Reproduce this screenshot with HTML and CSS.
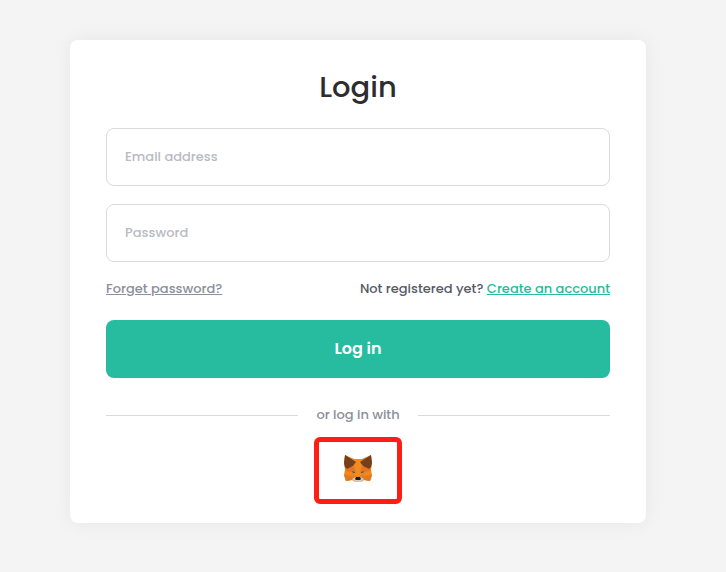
FILE: index.html
```html
<!DOCTYPE html>
<html lang="en">
<head>
<meta charset="utf-8">
<meta name="viewport" content="width=device-width, initial-scale=1">
<title>Login</title>
<link rel="stylesheet" href="styles.css">
</head>
<body>
<main class="card">
  <h1 class="title">Login</h1>
  <form class="form">
    <input class="field" type="email" placeholder="Email address" aria-label="Email address">
    <input class="field" type="password" placeholder="Password" aria-label="Password">
    <div class="links">
      <a class="forgot" href="#">Forget password?</a>
      <span>Not registered yet? <a class="create" href="#">Create an account</a></span>
    </div>
    <button class="submit" type="submit">Log in</button>
  </form>
  <div class="divider">or log in with</div>
  <button class="wallet" type="button" aria-label="MetaMask">
    <svg class="fox" viewBox="0 0 28 28" aria-hidden="true">
      <path fill="#e8821e" d="M1 0 10 4H18L27 0 28 8 27 15 28 20 26 26 20 25 17 27H11L8 25 2 26 0 20 1 15 0 8Z"/>
      <path fill="#f28a22" d="M10 4H18L20 14 17 21H11L8 14Z"/>
      <path fill="#e27625" d="M4 14 10 11 12 18 8 17 1 16ZM24 14 18 11 16 18 20 17 27 16Z"/>
      <path fill="#f6851b" d="M1 16 8 17 9 24 1 20ZM27 16 20 17 19 24 27 20Z"/>
      <path fill="#e07a22" d="M0 20 9 21 8 25 2 26ZM28 20 19 21 20 25 26 26Z"/>
      <path fill="#763e1a" d="M1 0 12 7 9 11 3 14 1 12 0 8ZM27 0 16 7 19 11 25 14 27 12 28 8Z"/>
      <path fill="#5f5a54" d="M8 16 11 17 11 18 9 18ZM20 16 17 17 17 18 19 18Z"/>
      <path fill="#d5c8be" d="M8 24 12 22H16L20 24 17 27H11Z"/>
      <path fill="#211d1b" d="M12 22H16L17 24 16 25H12L11 24Z"/>
    </svg>
  </button>
</main>
</body>
</html>
```
FILE: styles.css
```css
* {
  box-sizing: border-box;
}

body {
  margin: 0;
  padding: 40px 80px 48px 70px;
  background: #f4f4f4;
  color: #555a64;
  font: 500 13px/18px Poppins, Inter, sans-serif;
}

.card {
  display: flex;
  flex-direction: column;
  padding: 28px 36px 19px;
  border-radius: 8px;
  background: #fff;
  box-shadow: 0 0 20px rgba(0, 0, 0, 0.06);
}

.title {
  margin: 0 0 22px;
  color: #2d2d30;
  font-size: 29px;
  font-weight: 500;
  line-height: 38px;
  text-align: center;
}

.form {
  display: flex;
  flex-direction: column;
  gap: 18px;
}

.field {
  width: 100%;
  height: 58px;
  padding: 0 18px;
  border: 1px solid #dadada;
  border-radius: 8px;
  background: #fff;
  color: #2d2d30;
  font: inherit;
}

.field::placeholder {
  color: #b8bbc1;
  opacity: 1;
}

.links {
  display: flex;
  justify-content: space-between;
  margin-bottom: 4px;
}

.forgot {
  color: #8b909a;
}

.create {
  color: #27bb9f;
}

.submit {
  height: 58px;
  border: 0;
  border-radius: 8px;
  background: #27bb9f;
  color: #fff;
  font: inherit;
  font-size: 16px;
  font-weight: 600;
}

.divider {
  display: flex;
  align-items: center;
  gap: 18px;
  margin: 28px 0 13px;
  color: #8b909a;
}

.divider::before,
.divider::after {
  content: "";
  flex: 1;
  height: 1px;
  background: #dadada;
}

.wallet {
  display: flex;
  align-items: center;
  justify-content: center;
  align-self: center;
  width: 88px;
  height: 67px;
  padding: 0 0 3px;
  border: 5px solid #ff1e12;
  border-radius: 6px;
  background: #fff;
}

.fox {
  width: 28px;
  height: 28px;
}
```
